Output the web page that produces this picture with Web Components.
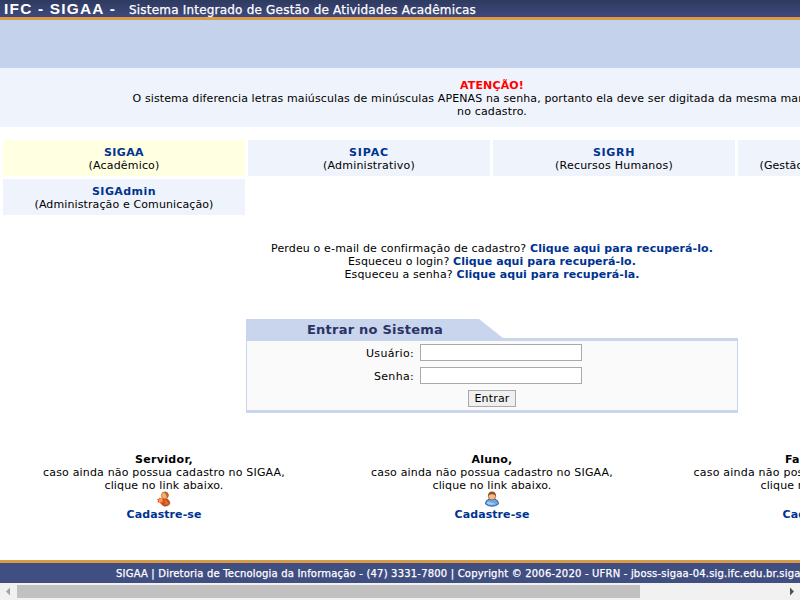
<!DOCTYPE html>
<html lang="pt-BR"><head><meta charset="utf-8"><title>SIGAA</title>
<style>
html,body{margin:0;width:800px;height:600px;overflow:hidden;background:#fff}
body{font:11px/13px Verdana,"DejaVu Sans",sans-serif;color:#000}
</style></head><body>
<sigaa-page></sigaa-page>
<script>
function define(name, html, after) {
  const t = document.createElement('template');
  t.innerHTML = html;
  customElements.define(name, class extends HTMLElement {
    connectedCallback() {
      if (!this.shadowRoot) this.attachShadow({mode:'open'}).append(t.content.cloneNode(true));
      if (after) after(this, this.shadowRoot);
    }
  });
}
// A single line of text tracked to a given width.
define('text-line', `<style>:host{display:inline-block;white-space:pre;vertical-align:top;text-align:left}</style><slot></slot>`, el => {
  const w = +el.getAttribute('w');
  if (!w) return;
  const n = el.textContent.length;
  el.style.letterSpacing = ((w - el.getBoundingClientRect().width) / n) + 'px';
});
define('app-header', `<style>
:host{display:flex;box-sizing:border-box;height:20px;border-bottom:3px solid #d99c45;background:linear-gradient(#2f3a60,#3e4a7c);color:#fff;line-height:18px;padding-left:4px}
.a{font:bold 15.4px/18px Arial,"Liberation Sans",sans-serif;width:125px}.b{font-size:12px;padding-top:1px;-webkit-text-stroke:.25px #fff}
</style><div class="a"><text-line w="112">IFC - SIGAA -</text-line></div><div class="b"><text-line w="347">Sistema Integrado de Gestão de Atividades Acadêmicas</text-line></div>`);
define('login-notice', `<style>
:host{display:block;box-sizing:border-box;height:59px;background:#eff3fb;padding-top:11px;text-align:center}
b{color:#f00}div{height:13px}
</style><div><b><text-line w="64">ATENÇÃO!</text-line></b></div><div><text-line w="719">O sistema diferencia letras maiúsculas de minúsculas APENAS na senha, portanto ela deve ser digitada da mesma maneira que</text-line></div><div><text-line w="70">no cadastro.</text-line></div>`);
define('system-cell', `<style>
:host{display:block;box-sizing:border-box;height:36px;background:#eff3fb;padding-top:6px;text-align:center}
:host([active]){background:#ffffe2}
b{color:#003390;display:block;height:13px}div{height:13px}
</style><b><slot name="name"></slot></b><div><slot></slot></div>`);
define('recover-row', `<style>:host{display:block;height:13px;text-align:center}b{color:#003390}</style><slot></slot><b><slot name="link"></slot></b>`);
define('login-field', `<style>
:host{display:flex;height:17px;margin-bottom:6px}
label{width:167px;text-align:right;line-height:19px;margin-right:6px}
input{box-sizing:border-box;width:162px;height:17px;border:1px solid #a9a9a9;background:#fff;padding:0;margin:0}
</style><label><slot></slot></label><input>`);
define('login-box', `<style>
:host{display:block;width:492px;margin-left:246px}
.tab{width:257px;height:19px;background:#c8d5ed;clip-path:polygon(0 0,233px 0,257px 100%,0 100%);text-align:center;color:#2c3265;font:bold 13px/21px Verdana,"DejaVu Sans",sans-serif}
.tab text-line{margin-left:1px}
.box{box-sizing:border-box;height:75px;border:1px solid #c8d5ed;border-width:3px 1px 3px;background:#fafafa;padding-top:3px}
button{display:block;box-sizing:border-box;width:48px;height:17px;margin-left:221px;border:1px solid #a9a9a9;background:#efefef;padding:0;font:11px/15px Verdana,"DejaVu Sans",sans-serif;color:#000}
</style><div class="tab"><text-line w="136">Entrar no Sistema</text-line></div>
<div class="box"><login-field><text-line w="48">Usuário:</text-line></login-field><login-field><text-line w="40">Senha:</text-line></login-field><button><text-line w="35">Entrar</text-line></button></div>`);
define('user-icon', `<style>:host{display:block;width:16px;height:16px}svg{display:block}:host([kind=aluno]) .s,:host(:not([kind=aluno])) .a{display:none}</style>
<svg width="16" height="16" viewBox="0 0 16 16">
<g class="s"><path d="M4 9Q7.5 7.2 10.5 7.5Q14 9.5 14 12.5Q12.5 15.3 8.5 15.3Q4.5 14 4 9Z" fill="#c4501f" stroke="#a8471d" stroke-width=".6"/><path d="M8.5 8.2L13 12.5L9 14Z" fill="#d8713a"/><circle cx="8.8" cy="4.4" r="3.5" fill="#edb36c" stroke="#b56a30" stroke-width=".7"/><path d="M7.5 1.3Q11 -.6 12.5 3Q13 6 10.8 7.5Q11 3.3 7.5 1.3Z" fill="#b8682c"/><path d="M3.8 6.2L5 7.5L7.2 7.2L7.2 9.4L8.4 11L6.3 11.6L5.2 13L3.7 11.6L1.4 11.5L2 9.6L1 8L3 7.8Z" fill="#f4542e"/><circle cx="4.7" cy="9.4" r="1.9" fill="#ff9748"/></g>
<g class="a"><path d="M1.5 13Q1.5 9 5 8.3H11Q14.5 9 14.5 13Q12 15.2 8 15.2T1.5 13Z" fill="#6ba6e7" stroke="#23548e" stroke-width=".9"/><path d="M3.5 10.5L12 13Q7 14.5 3 12.8Z" fill="#a5ccf5"/><circle cx="8" cy="5.3" r="3.7" fill="#f0bd89" stroke="#8f4f28" stroke-width=".7"/><path d="M4.2 5.2Q3.8 .8 8 .6Q12.2 .8 11.8 5.2Q10.5 3 8 3.2Q5.5 3 4.2 5.2Z" fill="#935024"/></g></svg>`);
define('signup-card', `<style>
:host{display:flex;flex-direction:column;align-items:center;width:328px;flex:none}
div,b{height:13px}.link{color:#003390}user-icon{margin:-1px 0 1px -1px}
</style><b><slot name="who"></slot></b><div><slot></slot></div><div><text-line w="119">clique no link abaixo.</text-line></div><user-icon></user-icon><b class="link"><text-line w="75">Cadastre-se</text-line></b>`, (el, r) => {
  if (el.hasAttribute('kind')) r.querySelector('user-icon').setAttribute('kind', el.getAttribute('kind'));
});
define('app-footer', `<style>
:host{display:block;box-sizing:border-box;height:23px;border-top:3px solid #d99c45;background:#404e82;color:#fff;font-size:10px;line-height:21px;padding-left:116px;white-space:nowrap;-webkit-text-stroke:.25px #fff}
</style><text-line w="704">SIGAA | Diretoria de Tecnologia da Informação - (47) 3331-7800 | Copyright © 2006-2020 - UFRN - jboss-sigaa-04.sig.ifc.edu.br.sigaa04</text-line>`);
define('scroll-bar', `<style>
:host{display:flex;height:17px;width:800px;background:#f1f1f1;align-items:center}
.thumb{width:623px;height:13px;background:#c1c1c1}.sp{flex:1}svg{display:block;width:17px;height:17px}
</style><svg viewBox="0 0 17 17"><path d="M10 4.5V12.5L6 8.5Z" fill="#a3a3a3"/></svg><div class="thumb"></div><div class="sp"></div><svg viewBox="0 0 17 17"><path d="M7 4.5V12.5L11 8.5Z" fill="#505050"/></svg>`);
define('sigaa-page', `<style>
:host{display:flex;flex-direction:column;width:984px;height:600px}
.band{height:48px;background:#c4d2eb}
.systems{display:grid;grid-template-columns:repeat(4,242px);gap:3px;margin:13px 3px 0}
.recover{margin-top:27px;height:39px}login-box{margin-top:38px}
.cards{display:flex;margin-top:40px}app-footer{margin-top:auto}
</style>
<app-header></app-header><div class="band"></div><login-notice></login-notice>
<div class="systems">
<system-cell active><text-line slot="name" w="40">SIGAA</text-line><text-line w="71">(Acadêmico)</text-line></system-cell>
<system-cell><text-line slot="name" w="40">SIPAC</text-line><text-line w="92">(Administrativo)</text-line></system-cell>
<system-cell><text-line slot="name" w="42">SIGRH</text-line><text-line w="118">(Recursos Humanos)</text-line></system-cell>
<system-cell><text-line slot="name" w="41">SIGED</text-line><text-line w="199">(Gestão Eletrônica de Documentos)</text-line></system-cell>
<system-cell><text-line slot="name" w="64">SIGAdmin</text-line><text-line w="179">(Administração e Comunicação)</text-line></system-cell>
</div>
<div class="recover">
<recover-row><text-line w="259">Perdeu o e-mail de confirmação de cadastro? </text-line><text-line slot="link" w="183">Clique aqui para recuperá-lo.</text-line></recover-row>
<recover-row><text-line w="105">Esqueceu o login? </text-line><text-line slot="link" w="183">Clique aqui para recuperá-lo.</text-line></recover-row>
<recover-row><text-line w="112">Esqueceu a senha? </text-line><text-line slot="link" w="183">Clique aqui para recuperá-la.</text-line></recover-row>
</div>
<login-box></login-box>
<div class="cards">
<signup-card><text-line slot="who" w="58">Servidor,</text-line><text-line w="242">caso ainda não possua cadastro no SIGAA,</text-line></signup-card>
<signup-card kind="aluno"><text-line slot="who" w="41">Aluno,</text-line><text-line w="242">caso ainda não possua cadastro no SIGAA,</text-line></signup-card>
<signup-card><text-line slot="who" w="70">Familiares,</text-line><text-line w="253">caso ainda não possua cadastro no sistema,</text-line></signup-card>
</div>
<app-footer></app-footer><scroll-bar></scroll-bar>`);
</script></body></html>
